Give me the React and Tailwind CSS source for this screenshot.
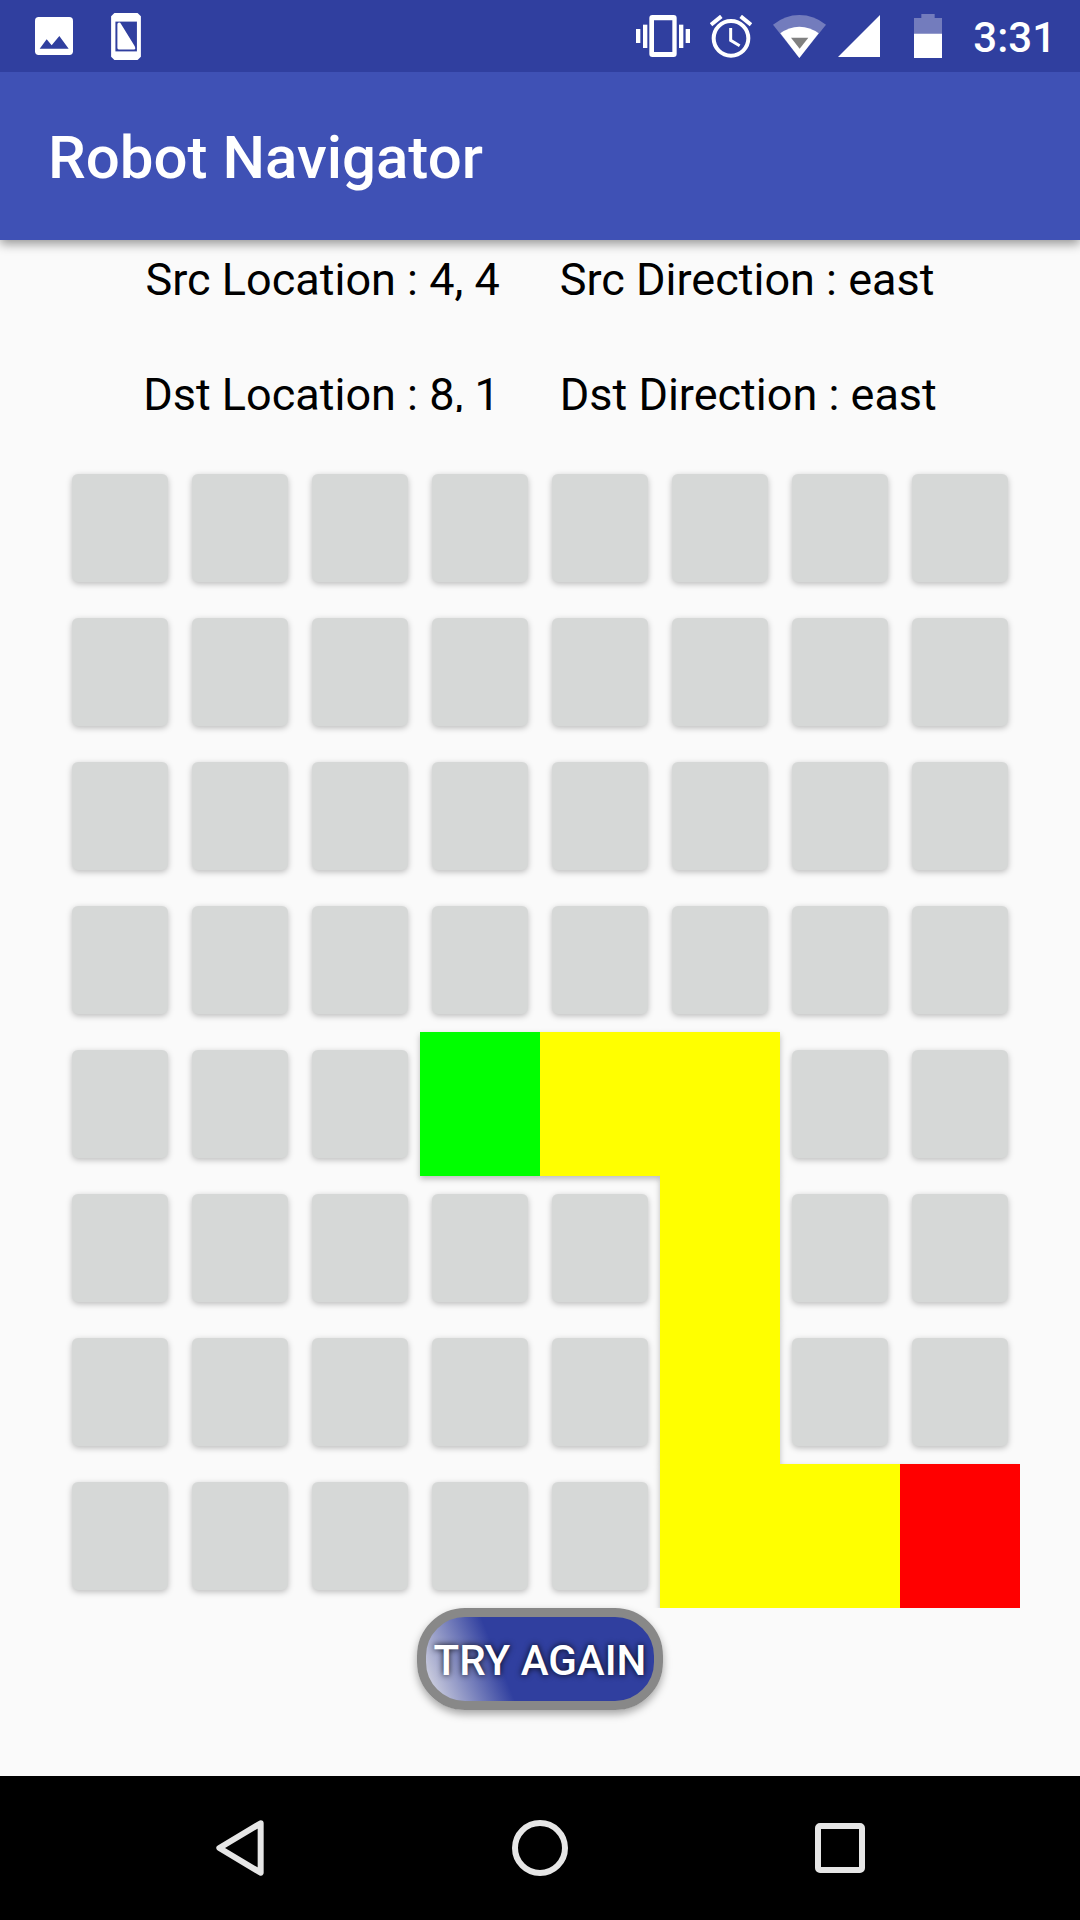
const COLS = 8;

const BOARD = [
  "........",
  "........",
  "........",
  "........",
  "...SPP..",
  ".....P..",
  ".....P..",
  ".....PPD",
];

const FILLS = {
  S: { color: "bg-[#00ff00]", name: "source" },
  P: { color: "bg-[#ffff00]", name: "path" },
  D: { color: "bg-[#ff0000]", name: "destination" },
};

function StatusBar() {
  return (
    <div className="flex h-[72px] items-center bg-[#303f9f] pr-6 pl-[35px] text-white">
      <svg className="h-[38px] w-[38px]" viewBox="0 0 114 114" aria-hidden="true">
        <rect width="114" height="114" rx="11" fill="#fff" />
        <path d="M14 95L35 67L50 85L73 57L101 95Z" fill="#303f9f" />
      </svg>
      <svg className="ml-[38px] h-[47px] w-[30px]" viewBox="0 0 90 142" aria-hidden="true">
        <path d="M10 0H80L90 10V132L80 142H10L0 132V10Z" fill="#fff" />
        <rect x="13" y="26" width="65" height="90" fill="#303f9f" />
        <path d="M19 34Q19 29 24 29Q28 29 30 33L71 100Q73 104 73 107Q73 110 69 110H23Q19 110 19 106Z" fill="#fff" />
      </svg>
      <div className="flex-1" />
      <svg className="h-[42px] w-[54px]" viewBox="0 0 162 126" fill="#fff" aria-hidden="true">
        <rect x="0" y="42" width="13" height="42" />
        <rect x="21" y="29" width="13" height="70" />
        <rect x="129" y="29" width="13" height="70" />
        <rect x="149" y="42" width="13" height="42" />
        <path fillRule="evenodd" d="M49 0H113Q122 0 122 9V117Q122 126 113 126H49Q40 126 40 117V9Q40 0 49 0ZM54 16V111H109V16Z" />
      </svg>
      <svg className="ml-[20px] h-[43px] w-[42px]" viewBox="0 0 126 129" fill="none" stroke="#fff" aria-hidden="true">
        <circle cx="63" cy="70" r="52" strokeWidth="12" />
        <path d="M62 39V76L89 92" strokeWidth="9" />
        <path d="M3 29L34 4M92 4L123 29" strokeWidth="12" />
      </svg>
      <svg className="ml-[21px] h-[43px] w-[53px]" viewBox="0 0 159 129" aria-hidden="true">
        <path d="M79 129L0 29Q36 0 79 0Q123 0 159 29Z" fill="#737cbd" />
        <path d="M79 129L22 55Q48 35 79 35Q111 35 137 55Z" fill="#fff" />
        <path d="M54 68H106L80 101Z" fill="#808080" />
      </svg>
      <svg className="ml-[12px] h-[42px] w-[42px]" viewBox="0 0 42 42" aria-hidden="true">
        <path d="M42 0V42H0Z" fill="#fff" />
      </svg>
      <svg className="ml-[34px] h-[44px] w-[28px]" viewBox="0 0 84 132" aria-hidden="true">
        <path d="M22 0H62V12H84V59H0V12H22Z" fill="#737cbd" />
        <rect y="59" width="84" height="73" fill="#fff" />
      </svg>
      <span className="ml-[31px] pt-1 text-[42px] leading-[48px] font-medium">3:31</span>
    </div>
  );
}

function Cell({ kind, row, col }) {
  const fill = FILLS[kind];
  const label = `Row ${row + 1}, column ${col + 1}`;
  if (fill) {
    return (
      <button
        type="button"
        aria-label={`${label}, ${fill.name}`}
        className="flex h-[144px] shadow-[0_3px_6px_rgba(0,0,0,0.25)]"
      >
        <span className={`relative z-10 h-full flex-1 ${fill.color}`} />
      </button>
    );
  }
  return (
    <button
      type="button"
      aria-label={label}
      className="mx-3 my-[18px] h-[108px] rounded-[6px] bg-[#d6d8d7] shadow-[0_2px_6px_rgba(0,0,0,0.25)]"
    />
  );
}

export default function App() {
  return (
    <div className="flex min-h-screen flex-col bg-[#fafafa] font-[Roboto,sans-serif]">
      <StatusBar />
      <header className="flex h-[168px] items-center bg-[#3f51b5] px-12 pt-1 shadow-[0_4px_10px_rgba(0,0,0,0.4)] [clip-path:inset(0_0_-20px_0)]">
        <h1 className="text-[60px] leading-[72px] font-medium text-white">Robot Navigator</h1>
      </header>

      <main className="flex flex-1 flex-col pt-[13px]">
        <div className="flex h-[115px] justify-center gap-[60px] text-[45px] leading-[54px] text-black">
          <p>Src Location : 4, 4</p>
          <p>Src Direction : east</p>
        </div>
        <div className="flex h-[44px] justify-center gap-[60px] overflow-hidden text-[45px] leading-[54px] text-black">
          <p>Dst Location : 8, 1</p>
          <p>Dst Direction : east</p>
        </div>

        <div className="isolate mx-[60px] mt-11 grid grid-cols-8 overflow-hidden">
          {BOARD.join("").split("").map((kind, i) => (
            <Cell key={i} kind={kind} row={Math.floor(i / COLS)} col={i % COLS} />
          ))}
        </div>

        <button
          type="button"
          className="h-[102px] w-[246px] self-center rounded-[48px] border-[9px] border-[#888888] bg-[linear-gradient(68deg,#e0e0e6_0%,#303f9f_34%)] bg-origin-padding pt-1 text-[42px] leading-[48px] font-medium whitespace-nowrap text-white shadow-[0_4px_8px_rgba(0,0,0,0.35)] [text-shadow:0_0_6px_rgba(0,0,0,0.9)]"
        >
          TRY AGAIN
        </button>
      </main>

      <nav aria-label="System" className="grid h-[144px] grid-cols-3 bg-black px-[90px]">
        <button type="button" aria-label="Back" className="flex items-center justify-center">
          <svg className="h-14 w-12" viewBox="0 0 144 168" fill="none" stroke="#e6e6e6" strokeWidth="18" strokeLinejoin="round" aria-hidden="true">
            <path d="M134 10L10 84L134 158Z" />
          </svg>
        </button>
        <button type="button" aria-label="Home" className="flex items-center justify-center">
          <svg className="h-14 w-14" viewBox="0 0 56 56" fill="none" stroke="#e6e6e6" strokeWidth="6" aria-hidden="true">
            <circle cx="28" cy="28" r="25" />
          </svg>
        </button>
        <button type="button" aria-label="Recent apps" className="flex items-center justify-center">
          <svg className="h-[50px] w-[50px]" viewBox="0 0 50 50" fill="none" stroke="#e6e6e6" strokeWidth="6" aria-hidden="true">
            <rect x="3" y="3" width="44" height="44" rx="2" />
          </svg>
        </button>
      </nav>
    </div>
  );
}
